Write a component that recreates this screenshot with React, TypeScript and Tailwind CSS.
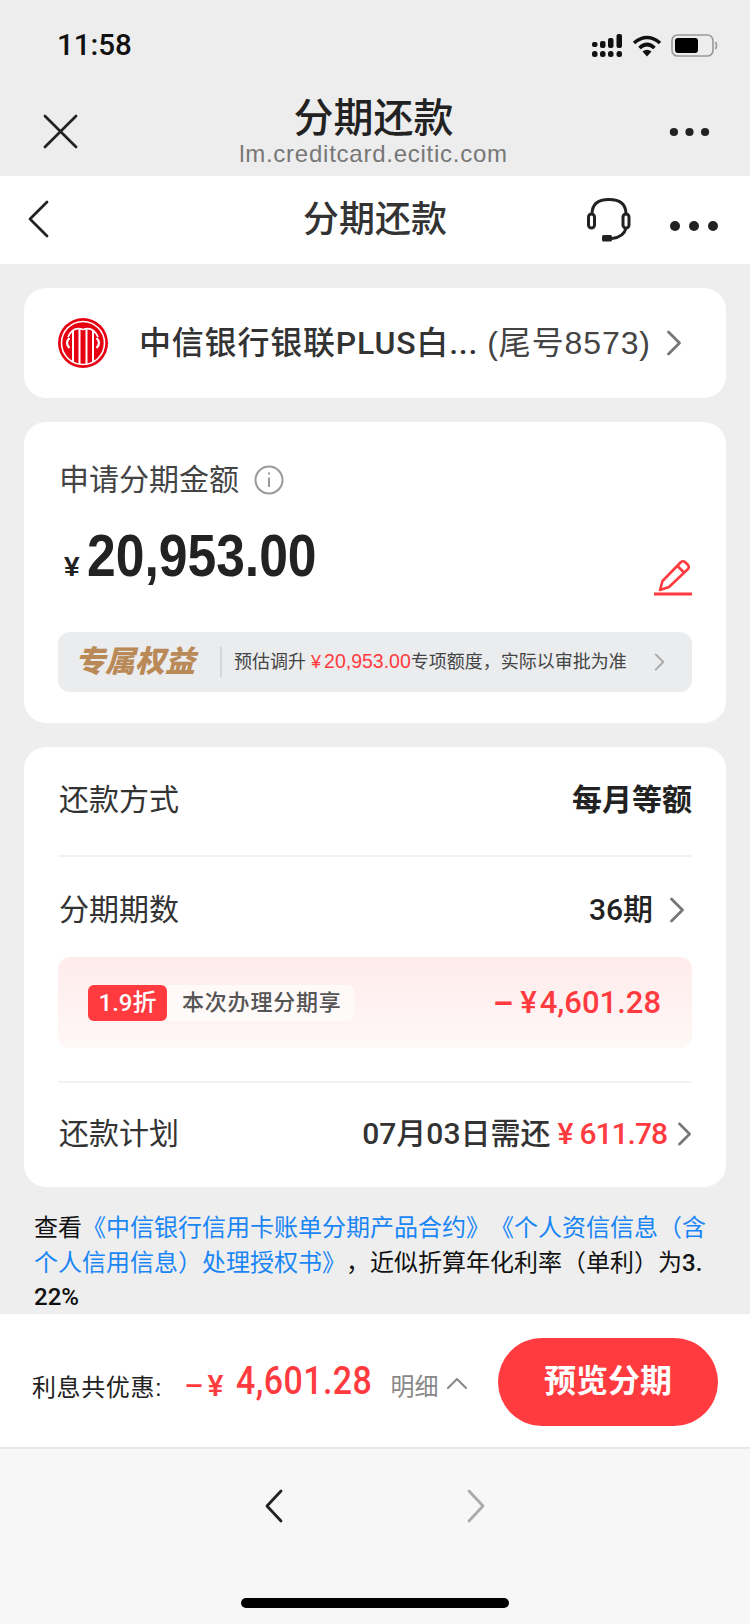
import React from "react";

const Chevron = ({ className = "" }: { className?: string }) => (
  <svg viewBox="0 0 16 28" fill="none" stroke="currentColor" strokeWidth="2.8" strokeLinecap="round" strokeLinejoin="round" className={className}>
    <path d="M2.5 3 L13.5 14 L2.5 25" />
  </svg>
);

const Dots = ({ className = "" }: { className?: string }) => (
  <svg viewBox="0 0 50 12" fill="currentColor" className={className}>
    <circle cx="6" cy="6" r="5" />
    <circle cx="25" cy="6" r="5" />
    <circle cx="44" cy="6" r="5" />
  </svg>
);

const Logo = () => (
  <svg viewBox="0 0 50 50" className="w-[50px] h-[50px] shrink-0">
    <circle cx="25" cy="25" r="25" fill="#e60012" />
    <circle cx="25" cy="25" r="21.5" fill="none" stroke="#fff" strokeWidth="1.6" />
    <path d="M10 19 Q15 8 25 11.5 Q35 8 40 19" fill="none" stroke="#fff" strokeWidth="1.8" />
    <path d="M21.5 11 V46 M28.5 11 V46" fill="none" stroke="#fff" strokeWidth="2" />
    <path d="M15 12 V44 M35 12 V44" fill="none" stroke="#fff" strokeWidth="2" />
    <path d="M11.5 20 Q6.5 25 11.5 30 M38.5 20 Q43.5 25 38.5 30" fill="none" stroke="#fff" strokeWidth="2.2" />
  </svg>
);

const Row = ({ label, children }: { label: string; children: React.ReactNode }) => (
  <div className="flex items-center justify-between">
    <span className="ml-px text-[30px] leading-[40px] text-[#333]">{label}</span>
    {children}
  </div>
);

const MED = "font-['Roboto','Noto_Sans_CJK_SC',sans-serif] font-medium";

export default function App() {
  return (
    <div className="w-[750px] h-[1624px] flex flex-col overflow-hidden bg-[#eeeeee] font-['Liberation_Sans','Noto_Sans_CJK_SC',sans-serif]">
      {/* status bar */}
      <div className="h-[88px] shrink-0 bg-[#ededed] flex items-center justify-between pl-[57px] pr-[32px] pt-[3px]">
        <span className="font-['Roboto',sans-serif] text-[29.5px] leading-none font-medium text-[#111]">11:58</span>
        <div className="flex items-center gap-[9px]">
          <svg viewBox="0 0 31 24" className="w-[31px] h-[24px]" fill="#111">
            <rect x="0" y="8" width="5.5" height="5" rx="2" />
            <rect x="8" y="7" width="5.5" height="7" rx="2" />
            <rect x="16" y="4" width="5.5" height="10" rx="2" />
            <rect x="24.5" y="0" width="5.5" height="14" rx="2" />
            <rect x="0" y="17" width="5.5" height="6" rx="2.5" />
            <rect x="8" y="17" width="5.5" height="6" rx="2.5" />
            <rect x="16" y="17" width="5.5" height="6" rx="2.5" />
            <rect x="24.5" y="17" width="5.5" height="6" rx="2.5" />
          </svg>
          <svg viewBox="0 0 30 22" className="w-[30px] h-[22px]" fill="none" stroke="#111" strokeWidth="3.6">
            <path d="M2 8 Q15 -3 28 8" />
            <path d="M7.5 13 Q15 6 22.5 13" />
            <path d="M15 21.5 L10.5 16.5 Q15 13 19.5 16.5 Z" fill="#111" stroke="none" />
          </svg>
          <svg viewBox="0 0 47 23" className="w-[47px] h-[23px]" fill="none">
            <rect x="1" y="1" width="41" height="21" rx="5.5" stroke="#999" strokeWidth="1.6" />
            <rect x="4" y="4" width="23" height="15" rx="3" fill="#000" />
            <path d="M44.5 8 Q46.5 11.5 44.5 15" stroke="#999" strokeWidth="1.6" />
          </svg>
        </div>
      </div>

      {/* wechat header */}
      <div className="h-[88px] shrink-0 bg-[#ededed] grid grid-cols-[1fr_auto_1fr] pl-[43px] pr-[40px]">
        <svg viewBox="0 0 36 36" className="w-[35px] h-[35px] mt-[26px]" fill="none" stroke="#222" strokeWidth="2.8" strokeLinecap="round">
          <path d="M2 2 L34 34 M34 2 L2 34" />
        </svg>
        <div className="flex flex-col items-center mr-[6px]">
          <span className="text-[40px] leading-[50px] mt-[5px] font-medium text-[#222]">分期还款</span>
          <span className="text-[24px] leading-[24px] -mt-[1px] tracking-[0.75px] text-[#777]">lm.creditcard.ecitic.com</span>
        </div>
        <Dots className="justify-self-end w-[41px] h-[10px] mt-[39px] text-[#222]" />
      </div>

      {/* page nav */}
      <div className="h-[88px] shrink-0 bg-white grid grid-cols-[1fr_auto_1fr] items-center pl-[27px] pr-[31px]">
        <svg viewBox="0 0 22 38" className="w-[22px] h-[38px] -mt-[2px]" fill="none" stroke="#222" strokeWidth="2.8" strokeLinecap="round" strokeLinejoin="round">
          <path d="M20 2 L3 19 L20 36" />
        </svg>
        <span className="ml-[4px] text-[36px] font-medium leading-none text-[#333]">分期还款</span>
        <div className="flex items-center justify-end gap-[38px]">
          <svg viewBox="0 0 44 44" className="w-[44px] h-[44px]" fill="none" stroke="#222" strokeWidth="3">
            <path d="M5 16 Q5 1.5 22 1.5 Q39 1.5 39 16" />
            <rect x="1.5" y="16" width="6" height="14" rx="3" />
            <rect x="36" y="16" width="6" height="14" rx="3" />
            <path d="M39 30 Q37 39 25 40.5" />
            <rect x="15" y="37" width="10" height="6.5" rx="1.5" fill="#222" stroke="none" />
          </svg>
          <Dots className="w-[50px] h-[12px] mt-[12px] text-[#222]" />
        </div>
      </div>

      {/* content */}
      <div className="flex-1 min-h-0 overflow-hidden flex flex-col gap-[24px] pt-[24px]">
        <div className="mx-[24px] h-[110px] shrink-0 bg-white rounded-[22px] flex items-center pl-[34px] pr-[44px]">
          <Logo />
          <span className={`ml-[31px] text-[32px] leading-none text-[#333] tracking-[0.8px] ${MED}`}>中信银行银联PLUS白...</span>
          <span className="ml-[9px] text-[32px] leading-none text-[#444] tracking-[0.9px]">(尾号8573)</span>
          <Chevron className="ml-auto w-[16px] h-[28px] text-[#777]" />
        </div>

        <div className="mx-[24px] h-[301px] shrink-0 bg-white rounded-[22px] px-[34px] pt-[38px]">
          <div className="flex items-center pl-[1px]">
            <span className="text-[30px] leading-[40px] text-[#444]">申请分期金额</span>
            <svg viewBox="0 0 30 30" className="w-[30px] h-[30px] ml-[15px]" fill="none" stroke="#999" strokeWidth="2">
              <circle cx="15" cy="15" r="13.5" />
              <path d="M15 12.5 V22 M15 7.5 V9.5" strokeWidth="2" />
            </svg>
          </div>
          <div className="flex items-start justify-between mt-[20px]">
            <div className="flex items-baseline pl-[6px]">
              <span className="text-[28px] font-bold text-[#222] leading-none">¥</span>
              <span className="ml-[7px] w-[229px] text-[60px] leading-[72px] font-bold text-[#222] origin-left scale-x-[0.86] inline-block whitespace-nowrap">20,953.00</span>
            </div>
            <svg viewBox="0 0 38 38" className="w-[38px] h-[38px] mt-[39px]" fill="none" stroke="#ff3b3f" strokeWidth="2.6" strokeLinejoin="round">
              <path d="M27 3 Q29 1.5 31 3 L34 6 Q35.5 8 34 10 L15 28 L6 31 L8.5 22 Z" />
              <path d="M23.5 7 L30.5 14" />
              <path d="M0 35 H38" strokeWidth="3" />
            </svg>
          </div>
          <div className="mt-[35px] h-[60px] bg-[#ebecee] rounded-[12px] flex items-center pl-[17px] pr-[27px]">
            <span className="text-[30px] leading-none italic font-black text-[#b98a57] whitespace-nowrap w-[122px]">专属权益</span>
            <span className="w-[2px] h-[30px] bg-[#d4d5d8] ml-[23px]" />
            <span className="ml-[12px] text-[18px] leading-none text-[#444] whitespace-nowrap">
              预估调升 <span className="text-[#ff3b3f]">¥<span className="ml-[3px] text-[19.5px]">20,953.00</span></span>专项额度，实际以审批为准
            </span>
            <Chevron className="ml-auto w-[11px] h-[20px] text-[#aaa]" />
          </div>
        </div>

        <div className="mx-[24px] h-[440px] shrink-0 bg-white rounded-[22px] px-[34px] flex flex-col">
          <div className="h-[110px] shrink-0 flex flex-col justify-center border-b-2 border-[#f2f2f2] pb-[2px]">
            <Row label="还款方式">
              <span className="text-[30px] leading-[40px] font-bold text-[#222]">每月等额</span>
            </Row>
          </div>
          <div className="mt-[33px]">
            <Row label="分期期数">
              <span className="flex items-center">
                <span className={`text-[30px] leading-[40px] text-[#222] ${MED}`}>36期</span>
                <Chevron className="ml-[16px] mr-[7px] w-[16px] h-[28px] text-[#777]" />
              </span>
            </Row>
          </div>
          <div className="mt-[27px] h-[91px] shrink-0 rounded-[12px] bg-gradient-to-b from-[#ffecec] to-[#fff7f7] flex items-start justify-between pl-[30px] pr-[31px] pt-[28px]">
            <div className="flex items-center">
              <span className={`h-[36px] w-[79px] bg-[#ff3b3f] rounded-[6px] text-white text-[24px] leading-[36px] text-center ${MED}`}>1.9折</span>
              <span className="h-[36px] w-[187px] bg-white/60 rounded-r-[6px] text-[#555] text-[22px] leading-[36px] font-medium pl-[15px] tracking-[0.8px]">本次办理分期享</span>
            </div>
            <span className={`flex items-center text-[#ff3b3f] text-[31px] leading-[36px] whitespace-nowrap ${MED}`}>
              <span className="font-bold mr-[7px] text-[32px]">–</span>¥<span className="ml-[3px]">4,601.28</span>
            </span>
          </div>
          <div className="mt-[33px] border-t-2 border-[#f2f2f2] pt-[31px]">
            <Row label="还款计划">
              <span className="flex items-center whitespace-nowrap">
                <span className={`text-[30px] leading-[40px] text-[#333] ${MED}`}>07月03日需还</span>
                <span className={`ml-[7px] text-[30px] leading-[40px] text-[#ff3b3f] ${MED}`}>¥<span className="ml-[6px] tracking-[-1px]">611.78</span></span>
                <Chevron className="ml-[10px] w-[15px] h-[26px] text-[#777]" />
              </span>
            </Row>
          </div>
        </div>

        <p className="px-[34px] w-[740px] mt-0 text-[24px] leading-[34.5px] text-[#111] break-all [text-spacing-trim:space-all]">
          查看<span className="text-[#1a86f5]">《中信银行信用卡账单分期产品合约》《个人资信信息（含个人信用信息）处理授权书》</span>，近似折算年化利率（单利）为<span className={MED}>3.22%</span>
        </p>
      </div>

      {/* action bar */}
      <div className="h-[135px] shrink-0 bg-white border-b-2 border-[#e8e8e8] flex items-center pl-[32px] pr-[32px] pt-[2px]">
        <span className="text-[24px] leading-none text-[#222] tracking-[0.6px] mt-[13px]">利息共优惠:</span>
        <span className={`ml-[22px] mt-[9px] text-[#ff3b3f] text-[30px] leading-none whitespace-nowrap ${MED}`}>–<span className="ml-[4px]">¥</span></span>
        <span className={`ml-[13px] w-[130px] text-[#ff3b3f] text-[39px] leading-none font-medium tracking-[0.5px] whitespace-nowrap origin-left scale-x-[0.87] inline-block ${MED}`}>4,601.28</span>
        <span className="ml-[24px] mt-[11px] text-[24px] leading-none text-[#888]">明细</span>
        <svg viewBox="0 0 20 12" className="ml-[9px] mt-[3px] w-[20px] h-[12px]" fill="none" stroke="#888" strokeWidth="2" strokeLinecap="round" strokeLinejoin="round">
          <path d="M1 11 L10 2 L19 11" />
        </svg>
        <div className="ml-auto w-[220px] h-[88px] rounded-full bg-[#ff3b3f] text-white text-[32px] font-bold flex items-center justify-center pb-[2px]">预览分期</div>
      </div>

      {/* browser nav */}
      <div className="h-[175px] shrink-0 bg-[#f7f7f7] flex flex-col items-center">
        <div className="flex items-center gap-[184px] mt-[40px]">
          <svg viewBox="0 0 18 34" className="w-[18px] h-[34px]" fill="none" stroke="#222" strokeWidth="2.8" strokeLinecap="round" strokeLinejoin="round">
            <path d="M16 2 L2 17 L16 32" />
          </svg>
          <svg viewBox="0 0 18 34" className="w-[18px] h-[34px]" fill="none" stroke="#aaa" strokeWidth="2.8" strokeLinecap="round" strokeLinejoin="round">
            <path d="M2 2 L16 17 L2 32" />
          </svg>
        </div>
        <div className="w-[268px] h-[10px] rounded-full bg-black mt-[75px]" />
      </div>
    </div>
  );
}
